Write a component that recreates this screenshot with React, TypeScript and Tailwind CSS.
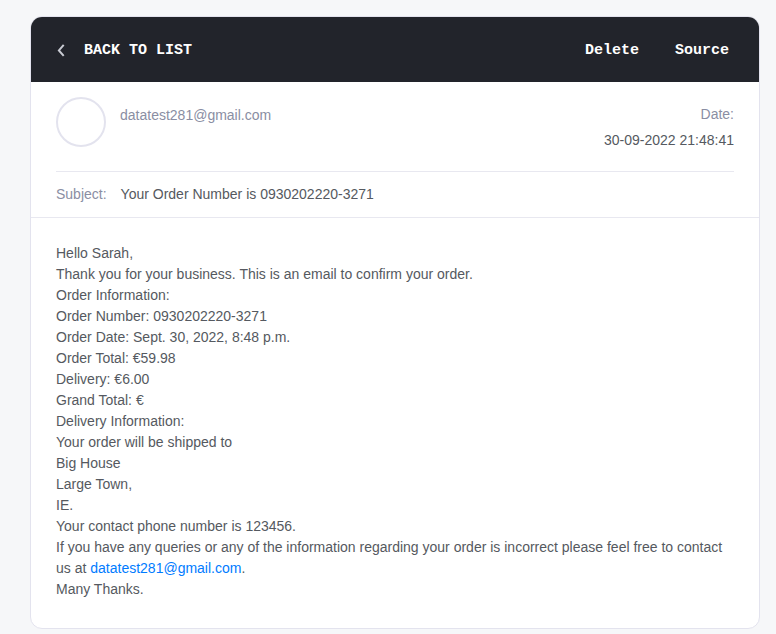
const SENDER = "datatest281@gmail.com";

const intro = [
  "Hello Sarah,",
  "Thank you for your business. This is an email to confirm your order.",
  "Order Information:",
  "Order Number: 0930202220-3271",
  "Order Date: Sept. 30, 2022, 8:48 p.m.",
  "Order Total: €59.98",
  "Delivery: €6.00",
  "Grand Total: €",
  "Delivery Information:",
  "Your order will be shipped to",
  "Big House",
  "Large Town,",
  "IE.",
  "Your contact phone number is 123456.",
];

function Toolbar() {
  return (
    <header className="flex items-center justify-between bg-[#22242b] pt-[23px] pr-[30px] pb-[21px] pl-6 font-['Liberation_Mono',monospace] text-[15px] leading-[21px] font-bold text-white">
      <button type="button" className="flex items-center gap-4">
        <svg
          className="h-3.5 w-3"
          viewBox="0 0 12 14"
          fill="none"
          stroke="#c9cbd3"
          strokeWidth="2"
          aria-hidden="true"
        >
          <path d="M8.7 0.9 3.9 6.4l4.8 5.5" />
        </svg>
        <span className="pl-px">BACK TO LIST</span>
      </button>
      <div className="flex gap-9">
        <button type="button">Delete</button>
        <button type="button">Source</button>
      </div>
    </header>
  );
}

export default function App() {
  return (
    <main className="min-h-screen bg-[#f6f7f9] pt-4 pr-4 pb-[5px] pl-[30px] font-['Liberation_Sans',Arial,sans-serif] text-sm leading-[21px] text-[#555960]">
      <article className="overflow-hidden rounded-xl border border-[#e3e3ee] bg-white">
        <Toolbar />
        <section className="px-[25px]">
          <div className="flex h-[90px] items-start justify-between border-b border-[#e8e8f0] pt-[15px]">
            <div className="flex gap-3.5">
              <div className="size-[50px] rounded-full border-2 border-[#e3e3ee]" />
              <p className="pt-2 text-[#8a8ea3]">{SENDER}</p>
            </div>
            <dl className="pt-1 text-right leading-[26px]">
              <dt className="text-[#8a8ea3]">Date:</dt>
              <dd>30-09-2022 21:48:41</dd>
            </dl>
          </div>
        </section>
        <dl className="flex h-[46px] items-center gap-3.5 border-b border-[#e8e8f0] px-[25px]">
          <dt className="text-[#8a8ea3]">Subject:</dt>
          <dd>Your Order Number is 0930202220-3271</dd>
        </dl>
        <section className="px-[25px] pt-[25px] pb-7">
          {intro.map((line) => (
            <p key={line}>{line}</p>
          ))}
          <p>
            If you have any queries or any of the information regarding your
            order is incorrect please feel free to contact us at{" "}
            <a href={`mailto:${SENDER}`} className="text-[#007bff]">
              {SENDER}
            </a>
            .
          </p>
          <p>Many Thanks.</p>
        </section>
      </article>
    </main>
  );
}
